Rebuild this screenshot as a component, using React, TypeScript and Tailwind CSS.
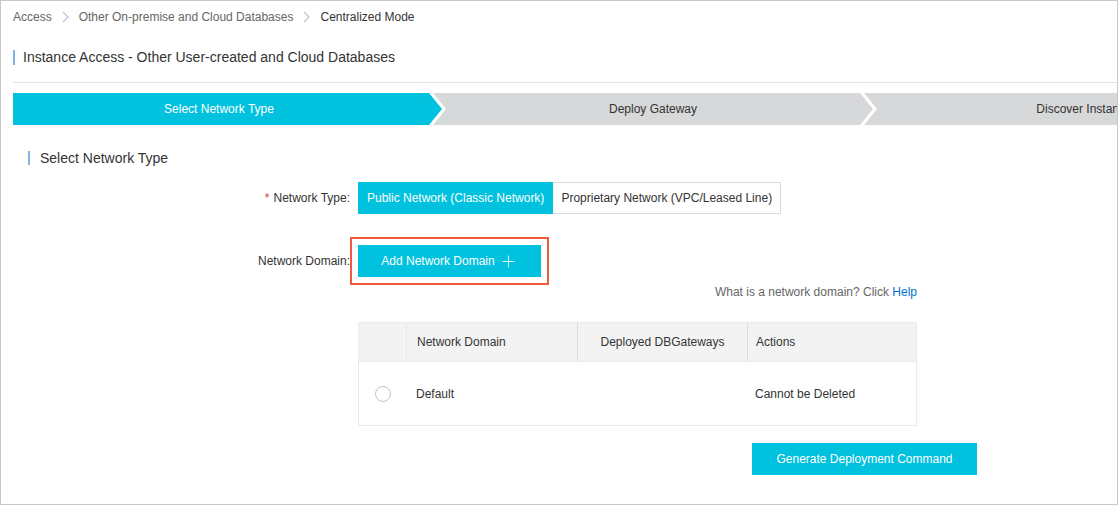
import { Plus } from 'lucide-react';

const FONT = "font-['Liberation_Sans',Arial,sans-serif]";

function Crumb() {
  return (
    <svg width="7" height="12" viewBox="0 0 7 12" className="mx-[10px]">
      <path d="M1 1 L6 6 L1 11" fill="none" stroke="#c4c4c4" strokeWidth="1.2" />
    </svg>
  );
}

function Steps() {
  return (
    <div className="mt-[10px] flex h-[32px] overflow-hidden text-[12px] leading-[14px]">
      <div className="flex h-full w-[429px] shrink-0 items-center justify-center bg-[#00c1de] pr-[17px] text-white [clip-path:polygon(0_0,calc(100%_-_13px)_0,100%_50%,calc(100%_-_13px)_100%,0_100%)]">
        Select Network Type
      </div>
      <div className="-ml-[9px] flex h-full w-[440px] shrink-0 items-center justify-center bg-[#d7d8d9] px-[13px] text-[#333] [clip-path:polygon(0_0,calc(100%_-_13px)_0,100%_50%,calc(100%_-_13px)_100%,0_100%,13px_50%)]">
        Deploy Gateway
      </div>
      <div className="-ml-[9px] flex h-full w-[440px] shrink-0 items-center justify-center bg-[#d7d8d9] px-[13px] text-[#333] [clip-path:polygon(0_0,calc(100%_-_13px)_0,100%_50%,calc(100%_-_13px)_100%,0_100%,13px_50%)]">
        Discover Instance
      </div>
    </div>
  );
}

export default function App() {
  return (
    <div className={`${FONT} h-[505px] w-[1118px] overflow-hidden border border-[#c8c8c8] bg-white pl-[12px]`}>
      {/* Breadcrumb */}
      <div className="flex items-center pt-[9px] text-[12px] leading-[14px]">
        <span className="text-[#666]">Access</span>
        <Crumb />
        <span className="text-[#666]">Other On-premise and Cloud Databases</span>
        <Crumb />
        <span className="text-[#333]">Centralized Mode</span>
      </div>

      {/* Page title */}
      <div className="mt-[25px] flex items-center">
        <div className="h-[15px] w-[2px] bg-[#80b4e6]" />
        <h1 className="ml-[8px] text-[14px] leading-[16px] text-[#333]">
          Instance Access - Other User-created and Cloud Databases
        </h1>
      </div>
      <div className="mt-[17px] h-px bg-[#e3e3e3]" />

      <Steps />

      {/* Section title */}
      <div className="mt-[25px] ml-[15px] flex items-center">
        <div className="h-[14px] w-[2px] bg-[#80b4e6]" />
        <h2 className="ml-[10px] text-[14px] leading-[16px] text-[#333]">Select Network Type</h2>
      </div>

      {/* Network type */}
      <div className="mt-[16px] flex items-center text-[12px] leading-[14px]">
        <label className="w-[337px] text-right text-[#333]">
          <span className="mr-[4px] text-[#e4393c]">*</span>Network Type:
        </label>
        <div className="ml-[8px] flex h-[32px]">
          <div className="flex items-center bg-[#00c1de] px-[9px] text-white">Public Network (Classic Network)</div>
          <div className="flex items-center border border-l-0 border-[#d9d9d9] px-[8px] text-[#333]">
            Proprietary Network (VPC/Leased Line)
          </div>
        </div>
      </div>

      {/* Network domain */}
      <div className="mt-[23px] flex text-[12px] leading-[14px]">
        <label className="flex h-[48px] w-[337px] items-center justify-end text-[#333]">Network Domain:</label>
        <div className="w-[567px]">
          <div className="w-[199px] border-2 border-[#f05a3c] p-[6px]">
            <button className="flex h-[32px] w-[183px] items-center justify-center gap-[4px] bg-[#00c1de] text-white">
              Add Network Domain
              <Plus size={19} strokeWidth={1.1} />
            </button>
          </div>
          <div className="ml-[8px] text-right text-[#666]">
            What is a network domain? Click <span className="text-[#0070cc]">Help</span>
          </div>

          {/* Table */}
          <div className="mt-[23px] ml-[8px] border border-[#ebebeb]">
            <div className="flex h-[38px] items-center bg-[#f3f3f3] text-[#333]">
              <div className="h-full w-[47px]" />
              <div className="flex h-full w-[171px] items-center border-l border-[#e8e8e8] pl-[10px]">Network Domain</div>
              <div className="flex h-full w-[170px] items-center justify-center border-l border-[#dcdcdc]">Deployed DBGateways</div>
              <div className="flex h-full flex-1 items-center border-l border-[#dcdcdc] pl-[8px]">Actions</div>
            </div>
            <div className="flex h-[64px] items-center border-t border-[#ebebeb] text-[#333]">
              <div className="flex w-[47px] justify-center">
                <span className="h-[16px] w-[16px] rounded-full border border-[#c4c4c4] bg-white" />
              </div>
              <div className="w-[171px] pl-[10px]">Default</div>
              <div className="w-[170px]" />
              <div className="flex-1 pl-[8px]">Cannot be Deleted</div>
            </div>
          </div>

          <button className="mt-[17px] ml-[402px] flex h-[32px] w-[225px] items-center justify-center bg-[#00c1de] text-white">
            Generate Deployment Command
          </button>
        </div>
      </div>
    </div>
  );
}
